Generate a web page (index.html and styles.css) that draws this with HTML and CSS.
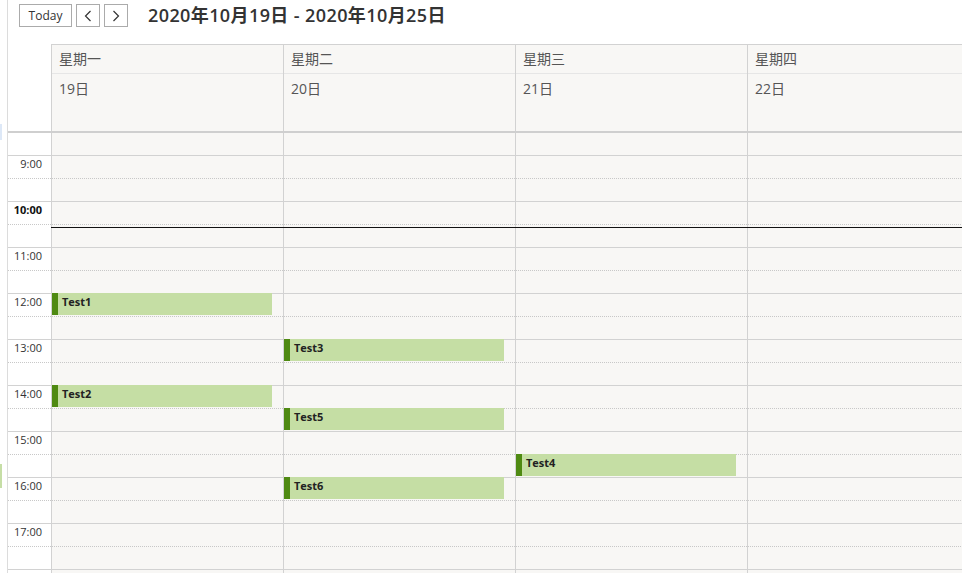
FILE: index.html
```html
<!DOCTYPE html>
<html lang="zh">
<head>
<meta charset="utf-8">
<title>Calendar</title>
<link rel="stylesheet" href="styles.css">
</head>
<body>
<div class="page">
  <div class="rail">
    <div class="mark mark-blue"></div>
    <div class="mark mark-green"></div>
  </div>
  <div class="main">
    <div class="toolbar">
      <button class="btn btn-today">Today</button>
      <button class="btn btn-nav" aria-label="prev">
        <svg width="8" height="12" viewBox="0 0 8 12"><path d="M6.5 1 L1.5 6 L6.5 11" fill="none" stroke="#333" stroke-width="1.2"/></svg>
      </button>
      <button class="btn btn-nav" aria-label="next">
        <svg width="8" height="12" viewBox="0 0 8 12"><path d="M1.5 1 L6.5 6 L1.5 11" fill="none" stroke="#333" stroke-width="1.2"/></svg>
      </button>
      <h1 class="title">2020年10月19日 - 2020年10月25日</h1>
    </div>

    <div class="head">
      <div class="head-gutter"></div>
      <div class="head-day"><div class="dow">星期一</div><div class="dnum">19日</div></div>
      <div class="head-day"><div class="dow">星期二</div><div class="dnum">20日</div></div>
      <div class="head-day"><div class="dow">星期三</div><div class="dnum">21日</div></div>
      <div class="head-day"><div class="dow">星期四</div><div class="dnum">22日</div></div>
    </div>

    <div class="body">
      <div class="gutter">
        <div class="slot first"></div>
        <div class="slot hour"><span class="tl">9:00</span></div>
        <div class="slot half"></div>
        <div class="slot hour"><span class="tl now">10:00</span></div>
        <div class="slot half"></div>
        <div class="slot hour"><span class="tl">11:00</span></div>
        <div class="slot half"></div>
        <div class="slot hour"><span class="tl">12:00</span></div>
        <div class="slot half"></div>
        <div class="slot hour"><span class="tl">13:00</span></div>
        <div class="slot half"></div>
        <div class="slot hour"><span class="tl">14:00</span></div>
        <div class="slot half"></div>
        <div class="slot hour"><span class="tl">15:00</span></div>
        <div class="slot half"></div>
        <div class="slot hour"><span class="tl">16:00</span></div>
        <div class="slot half"></div>
        <div class="slot hour"><span class="tl">17:00</span></div>
        <div class="slot half"></div>
        <div class="slot hour"></div>
      </div>

      <div class="day">
        <div class="slot first"></div>
        <div class="slot hour"></div><div class="slot half"></div>
        <div class="slot hour"></div><div class="slot half"></div>
        <div class="slot hour"></div><div class="slot half"></div>
        <div class="slot hour"></div><div class="slot half"></div>
        <div class="slot hour"></div><div class="slot half"></div>
        <div class="slot hour"></div><div class="slot half"></div>
        <div class="slot hour"></div><div class="slot half"></div>
        <div class="slot hour"></div><div class="slot half"></div>
        <div class="slot hour"></div><div class="slot half"></div>
        <div class="slot hour"></div>
        <div class="event" style="top:160px"><span class="ev-bar"></span><span class="ev-title">Test1</span></div>
        <div class="event" style="top:252px"><span class="ev-bar"></span><span class="ev-title">Test2</span></div>
      </div>

      <div class="day">
        <div class="slot first"></div>
        <div class="slot hour"></div><div class="slot half"></div>
        <div class="slot hour"></div><div class="slot half"></div>
        <div class="slot hour"></div><div class="slot half"></div>
        <div class="slot hour"></div><div class="slot half"></div>
        <div class="slot hour"></div><div class="slot half"></div>
        <div class="slot hour"></div><div class="slot half"></div>
        <div class="slot hour"></div><div class="slot half"></div>
        <div class="slot hour"></div><div class="slot half"></div>
        <div class="slot hour"></div><div class="slot half"></div>
        <div class="slot hour"></div>
        <div class="event" style="top:206px"><span class="ev-bar"></span><span class="ev-title">Test3</span></div>
        <div class="event" style="top:275px"><span class="ev-bar"></span><span class="ev-title">Test5</span></div>
        <div class="event" style="top:344px"><span class="ev-bar"></span><span class="ev-title">Test6</span></div>
      </div>

      <div class="day">
        <div class="slot first"></div>
        <div class="slot hour"></div><div class="slot half"></div>
        <div class="slot hour"></div><div class="slot half"></div>
        <div class="slot hour"></div><div class="slot half"></div>
        <div class="slot hour"></div><div class="slot half"></div>
        <div class="slot hour"></div><div class="slot half"></div>
        <div class="slot hour"></div><div class="slot half"></div>
        <div class="slot hour"></div><div class="slot half"></div>
        <div class="slot hour"></div><div class="slot half"></div>
        <div class="slot hour"></div><div class="slot half"></div>
        <div class="slot hour"></div>
        <div class="event" style="top:321px"><span class="ev-bar"></span><span class="ev-title">Test4</span></div>
      </div>

      <div class="day">
        <div class="slot first"></div>
        <div class="slot hour"></div><div class="slot half"></div>
        <div class="slot hour"></div><div class="slot half"></div>
        <div class="slot hour"></div><div class="slot half"></div>
        <div class="slot hour"></div><div class="slot half"></div>
        <div class="slot hour"></div><div class="slot half"></div>
        <div class="slot hour"></div><div class="slot half"></div>
        <div class="slot hour"></div><div class="slot half"></div>
        <div class="slot hour"></div><div class="slot half"></div>
        <div class="slot hour"></div><div class="slot half"></div>
        <div class="slot hour"></div>
      </div>

      <div class="now-line"></div>
    </div>
  </div>
</div>
</body>
</html>
```

FILE: styles.css
```css
html, body {
  margin: 0;
  padding: 0;
  background: #ffffff;
  overflow: hidden;
}

body {
  font-family: "Open Sans", "Noto Sans CJK SC", sans-serif;
  color: #333333;
  width: 962px;
  height: 573px;
}

.page {
  display: flex;
  height: 573px;
  overflow: hidden;
}

.rail {
  width: 7px;
  flex: none;
  display: flex;
  flex-direction: column;
}

.mark {
  width: 2px;
}

.mark-blue {
  margin-top: 124px;
  height: 16px;
  background: #dde8f7;
}

.mark-green {
  margin-top: 324px;
  height: 24px;
  background: #c6dea6;
}

.main {
  flex: 1;
  border-left: 1px solid #dcdcdc;
  min-width: 0;
  overflow: hidden;
}

/* toolbar */
.toolbar {
  height: 44px;
  box-sizing: border-box;
  padding: 4px 0 0 11px;
  display: flex;
  align-items: flex-start;
}

.btn {
  font-family: "Open Sans", sans-serif;
  height: 23px;
  box-sizing: border-box;
  background: #ffffff;
  border: 1px solid #ababab;
  border-radius: 0;
  padding: 0;
  margin: 0;
  color: #333;
  display: flex;
  align-items: center;
  justify-content: center;
}

.btn-today {
  width: 53px;
  font-size: 12px;
}

.btn-nav {
  width: 24px;
  margin-left: 4px;
}

.title {
  margin: 0 0 0 20px;
  font-size: 18px;
  font-weight: 600;
  line-height: 23px;
  color: #333333;
  white-space: nowrap;
  letter-spacing: 0.4px;
}

/* header */
.head {
  display: grid;
  grid-template-columns: 43px repeat(4, 232px);
  border-bottom: 2px solid #cfcfcf;
}

.head-gutter {
  background: #ffffff;
}

.head-day {
  background: #f8f7f5;
  border-top: 1px solid #d2d2d2;
  border-left: 1px solid #d2d2d2;
  box-sizing: border-box;
}

.dow {
  height: 28px;
  border-bottom: 1px solid #e6e6e6;
  padding-left: 7px;
  font-size: 14px;
  line-height: 28px;
  color: #555555;
}

.dnum {
  height: 57px;
  padding-left: 7px;
  font-size: 14px;
  line-height: 30px;
  color: #555555;
}

/* body grid */
.body {
  position: relative;
  display: grid;
  grid-template-columns: 43px repeat(4, 232px);
}

.gutter {
  background: #ffffff;
}

.day {
  position: relative;
  background: #f8f7f5;
  border-left: 1px solid #d2d2d2;
}

.slot {
  height: 23px;
  box-sizing: border-box;
}

.slot.first {
  height: 22px;
}

.slot.hour {
  border-top: 1px solid #d2d2d2;
}

.slot.half {
  border-top: 1px dotted #c8c8c8;
}

.tl {
  display: block;
  text-align: right;
  padding-right: 9px;
  font-size: 11px;
  line-height: 14px;
  padding-top: 1px;
  color: #333333;
}

.tl.now {
  font-weight: 700;
  color: #111111;
}

.now-line {
  position: absolute;
  left: 43px;
  right: 0;
  top: 94px;
  height: 1px;
  background: #111111;
}

/* events */
.event {
  position: absolute;
  left: 0;
  width: 220px;
  height: 22px;
  background: #c5dea4;
  display: flex;
  align-items: flex-start;
}

.ev-bar {
  width: 6px;
  align-self: stretch;
  background: #4f8a12;
  flex: none;
}

.ev-title {
  margin-left: 4px;
  font-size: 11px;
  font-weight: 700;
  line-height: 14px;
  padding-top: 2px;
  color: #222222;
}
```
